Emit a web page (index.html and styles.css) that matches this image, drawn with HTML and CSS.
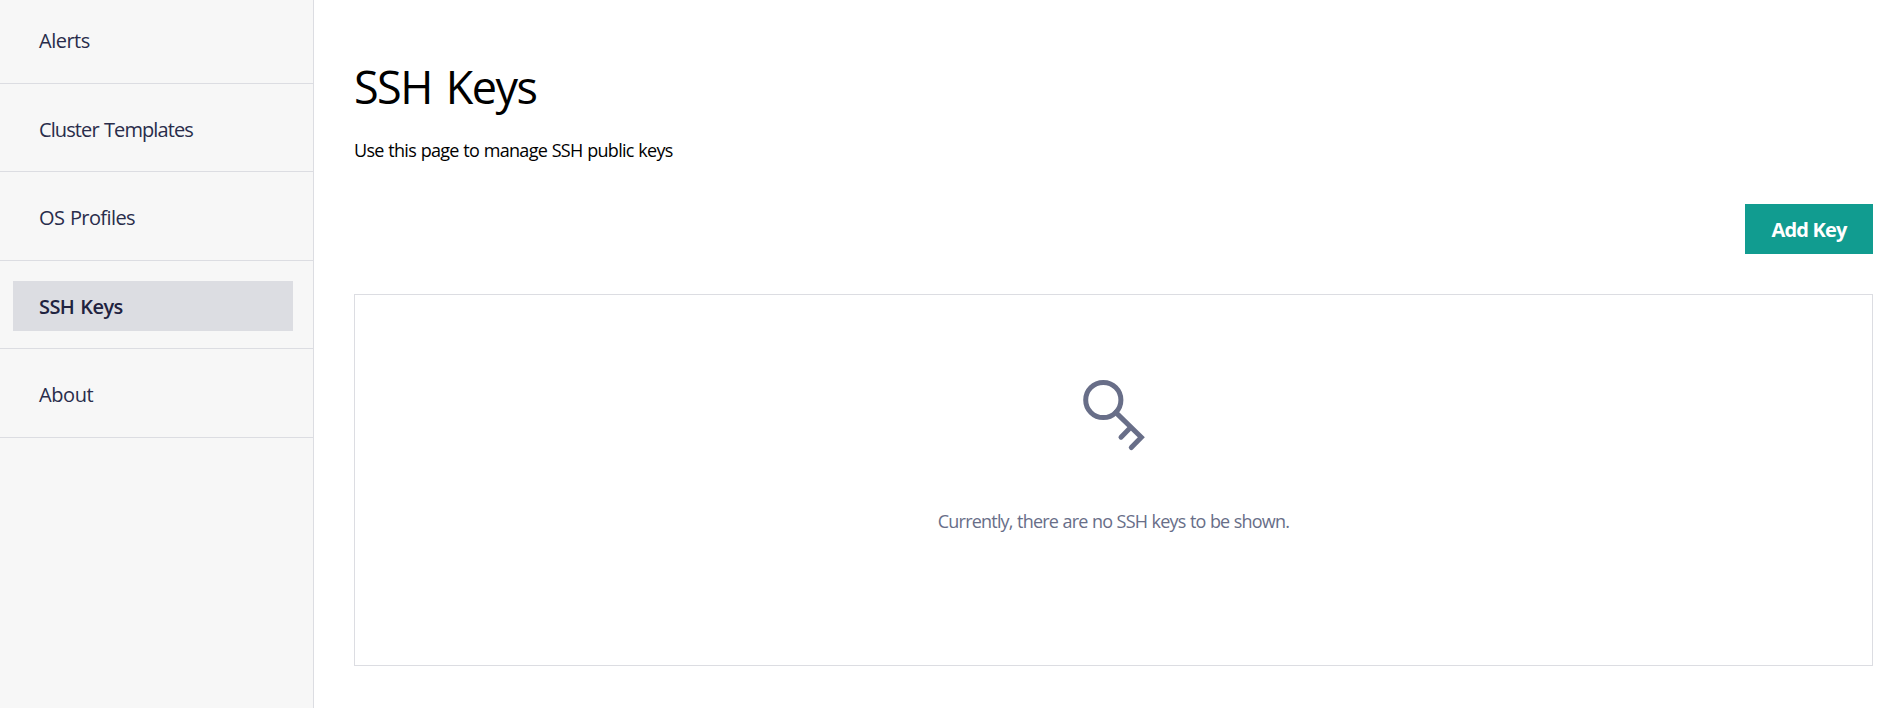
FILE: index.html
```html
<!DOCTYPE html>
<html lang="en">
<head>
<meta charset="utf-8">
<title>SSH Keys</title>
<link rel="stylesheet" href="styles.css">
</head>
<body>
<div class="app">
  <nav class="sidebar">
    <div class="item first"><a class="link alerts">Alerts</a></div>
    <div class="item"><a class="link templates">Cluster Templates</a></div>
    <div class="item tall"><a class="link profiles">OS Profiles</a></div>
    <div class="item"><a class="link active">SSH Keys</a></div>
    <div class="item tall"><a class="link about">About</a></div>
  </nav>
  <main class="content">
    <h1 class="title">SSH Keys</h1>
    <p class="subtitle">Use this page to manage SSH public keys</p>
    <div class="actions"><button class="add">Add Key</button></div>
    <section class="empty">
      <svg class="key" width="64" height="74" viewBox="0 0 64 74" fill="none" stroke="#686e88" stroke-width="5">
        <circle cx="21.3" cy="22" r="17.6"/>
        <path stroke-linecap="round" d="M33.7 34.4 59.3 59.3 49.3 69.5M48.5 49.6 39 59.2"/>
      </svg>
      <p class="message">Currently, there are no SSH keys to be shown.</p>
    </section>
  </main>
</div>
</body>
</html>
```
FILE: styles.css
```css
* { box-sizing: border-box; }
body { margin: 0; background: #fff; color: #000; font-family: "Segoe UI", "Open Sans", "Noto Sans", sans-serif; }
.app { display: flex; height: 708px; overflow: hidden; }
.sidebar { width: 314px; flex: none; background: #f7f7f7; border-right: 1px solid #dcdde2; }
.item { height: 88px; padding: 20px 20px 0 13px; border-bottom: 1px solid #dcdde2; }
.item.first { height: 84px; padding-top: 15px; }
.item.tall { height: 89px; }
.link { display: block; height: 50px; line-height: 51px; padding-left: 26px; font-size: 20px; color: #292d4b; letter-spacing: -0.5px; white-space: nowrap; }
.templates { letter-spacing: -0.9px; word-spacing: 1px; line-height: 52px; }
.profiles { letter-spacing: -0.6px; word-spacing: 1px; }
.about { letter-spacing: -0.4px; }
.active { background: #dcdde2; font-weight: 600; color: #1f2340; letter-spacing: -0.6px; word-spacing: 1.5px; }
.content { flex: 1; padding: 53px 20px 0 40px; }
.title { margin: 0; height: 68px; line-height: 68px; font-size: 45px; font-weight: 400; letter-spacing: -1.6px; word-spacing: 4px; }
.subtitle { margin: 13px 0 0; height: 32px; line-height: 32px; font-size: 18px; letter-spacing: -0.7px; word-spacing: 0.6px; }
.actions { display: flex; justify-content: flex-end; margin-top: 38px; }
.add { width: 128px; height: 50px; padding: 2px 0 0; border: 0; background: #119c90; color: #fff; font: 700 20px/48px "Segoe UI", "Open Sans", "Noto Sans", sans-serif; letter-spacing: -0.8px; }
.empty { height: 372px; margin-top: 40px; border: 1px solid #dcdde2; display: flex; flex-direction: column; align-items: center; padding-top: 83px; }
.key { display: block; }
.message { margin: 53px 0 0; line-height: 32px; font-size: 18px; letter-spacing: -0.8px; word-spacing: 0.5px; color: #686e88; }
```
